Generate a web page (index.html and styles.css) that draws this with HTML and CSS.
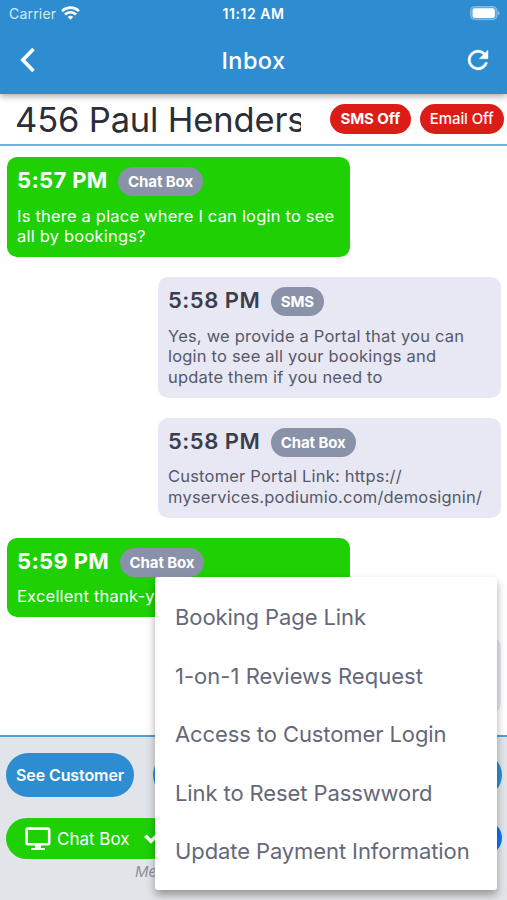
FILE: index.html
```html
<!DOCTYPE html>
<html lang="en">
<head>
<meta charset="utf-8">
<title>Inbox</title>
<link rel="stylesheet" href="styles.css">
</head>
<body>
<div class="phone">
  <header class="top">
    <div class="status">
      <div class="carrier"><span>Carrier</span>
        <svg width="19" height="14" viewBox="0 0 19 14" fill="none" stroke="#fff" stroke-width="2.7"><path d="M1.1 5.1a12.1 12.1 0 0 1 16.8 0M4 8.5a7.9 7.9 0 0 1 11 0"/><path d="M9.5 13.7L6.7 11a4 4 0 0 1 5.6 0z" fill="#fff" stroke="none"/></svg>
      </div>
      <div class="clock">11:12 AM</div>
      <div class="battery"><svg width="30" height="15" viewBox="0 0 30 15"><rect x=".6" y=".6" width="26.4" height="13" rx="4" fill="#5ea8db" stroke="#8dc0e4" stroke-width="1"/><rect x="2.6" y="2.2" width="22.2" height="9.8" rx="2.2" fill="#fff"/><path d="M27.9 5v4.4q1.6-.6 1.6-2.2T27.9 5z" fill="#8dc0e4"/></svg></div>
    </div>
    <nav class="bar">
      <svg class="back" width="16" height="26" viewBox="0 0 16 26" fill="none" stroke="#fff" stroke-width="3.6"><path d="M13.5 2L2.8 13l10.7 11"/></svg>
      <h1>Inbox</h1>
      <svg class="reload" width="30" height="30" viewBox="0 0 24 24" fill="#fff" stroke="#fff" stroke-width=".3"><path d="M17.65 6.35A7.96 7.96 0 0 0 12 4a8 8 0 1 0 7.73 10h-2.08A6 6 0 1 1 12 6c1.66 0 3.14.69 4.22 1.78L13 11h7V4z"/></svg>
    </nav>
  </header>
  <section class="person">
    <div class="name">456 Paul Henders</div>
    <span class="off sms">SMS Off</span>
    <span class="off email">Email Off</span>
  </section>
  <main class="thread">
    <article class="msg in">
      <div class="head"><time>5:57 PM</time><span class="tag">Chat Box</span></div>
      <p>Is there a place where I can login to see<br>all by bookings?</p>
    </article>
    <article class="msg out">
      <div class="head"><time>5:58 PM</time><span class="tag">SMS</span></div>
      <p>Yes, we provide a Portal that you can<br>login to see all your bookings and<br>update them if you need to</p>
    </article>
    <article class="msg out">
      <div class="head"><time>5:58 PM</time><span class="tag">Chat Box</span></div>
      <p>Customer Portal Link: https://<br>myservices.podiumio.com/demosignin/</p>
    </article>
    <article class="msg in">
      <div class="head"><time>5:59 PM</time><span class="tag">Chat Box</span></div>
      <p>Excellent thank-y</p>
    </article>
    <article class="msg out last"></article>
  </main>
  <footer class="composer">
    <div class="row">
      <button class="btn customer">See Customer</button>
      <button class="btn wide"></button>
    </div>
    <div class="row second">
      <button class="btn channel">
        <svg width="26" height="24" viewBox="0 0 26 24" fill="none" stroke="#fff" stroke-width="2.6"><rect x="1.6" y="1.6" width="22.6" height="15.6" rx="1.4"/><path d="M12.9 17.5v4" stroke-width="6"/><path d="M6 22h14" stroke-width="2"/></svg>
        <span>Chat Box</span>
        <svg class="chev" width="14" height="10" viewBox="0 0 14 10" fill="none" stroke="#fff" stroke-width="3.6"><path d="M1.3 1.8L7 7.3l5.7-5.5"/></svg>
      </button>
      <button class="btn send"></button>
    </div>
    <div class="hint">Me</div>
  </footer>
  <div class="menu">
    <div class="item">Booking Page Link</div>
    <div class="item reviews">1-on-1 Reviews Request</div>
    <div class="item">Access to Customer Login</div>
    <div class="item">Link to Reset Passwword</div>
    <div class="item">Update Payment Information</div>
  </div>
</div>
</body>
</html>
```
FILE: styles.css
```css
* { box-sizing: border-box; }
body { margin: 0; font-family: Inter, "Liberation Sans", sans-serif; background: #fff; }
.phone { position: relative; width: 507px; height: 900px; overflow: hidden; display: flex; flex-direction: column; }
.top { height: 94px; background: #2d8dd0; color: #fff; box-shadow: 0 2px 7px rgba(0,0,0,.36); flex: none; z-index: 1; }
.status { height: 27px; display: grid; grid-template-columns: 1fr auto 1fr; align-items: center; padding: 0 7px 0 9px; font-size: 14px; }
.carrier { display: flex; align-items: center; gap: 6px; letter-spacing: .2px; color: #d9eaf7; }
.carrier svg { margin: -2px 0 0 -1px; }
.clock { font-weight: 600; font-size: 14px; letter-spacing: .55px; margin-left: -2px; }
.battery { display: flex; justify-content: flex-end; }
.bar { height: 66px; display: grid; grid-template-columns: 1fr auto 1fr; align-items: center; padding: 0 14px 0 20px; }
.bar h1 { margin: 0 6px 0 0; font-size: 23.5px; font-weight: 500; letter-spacing: .4px; }
.reload { justify-self: end; }
.person { height: 52px; flex: none; display: flex; align-items: center; padding-left: 15px; border-bottom: 2px solid #6db4e0; }
.name { width: 286px; overflow: hidden; white-space: nowrap; font-size: 34.5px; line-height: 44px; color: #2b2d38; letter-spacing: -.15px; padding-top: 2px; }
.off { height: 30px; line-height: 30px; border-radius: 15px; background: #dc1c16; color: #fff; text-align: center; font-size: 15px; white-space: nowrap; }
.sms { width: 80.5px; margin-left: 29px; font-weight: 700; letter-spacing: -.05px; }
.email { width: 84.5px; margin-left: 9px; font-weight: 500; letter-spacing: -.1px; }
.thread { height: 589px; flex: none; padding: 11px 6.5px 0 7px; display: flex; flex-direction: column; gap: 20px; }
.msg { width: 343px; border-radius: 10px; padding: 8px 10px 10px; flex: none; }
.in { background: #1ed004; color: #fff; }
.out { width: 342.5px; background: #e8e8f4; color: #555968; align-self: flex-end; }
.head { display: flex; height: 32px; margin-bottom: 8.7px; }
.msg time { font-weight: 700; font-size: 22px; line-height: 31px; letter-spacing: .35px; }
.out time { color: #3b3e4b; font-weight: 600; letter-spacing: .5px; }
.tag { height: 29px; line-height: 29px; margin: 2px 0 0 10.4px; padding: 0 10px; border-radius: 15px; background: #8992a8; color: #fff; font-weight: 700; font-size: 15px; letter-spacing: -.1px; }
.msg p { margin: 0; font-size: 16.5px; line-height: 20.67px; letter-spacing: .2px; white-space: nowrap; }
.last { height: 76px; }
.composer { flex: 1; background: #e1e5e9; border-top: 2px solid #4d9fd6; padding: 16px 5px 0 6px; }
.row { display: flex; justify-content: space-between; }
.second { margin-top: 21px; }
.btn { border: 0; padding: 0; color: #fff; font-family: inherit; border-radius: 22px; white-space: nowrap; }
.customer { width: 128px; height: 44px; background: #2d8dd0; font-size: 16px; font-weight: 600; letter-spacing: -.1px; }
.wide { width: 349px; background: #2d8dd0; }
.channel { display: flex; align-items: center; width: 166px; height: 41px; padding-left: 19px; background: #1ed004; font-size: 17px; }
.channel span { margin-left: 6px; }
.chev { margin-left: 14px; }
.send { width: 90px; height: 34px; margin-top: 3px; background: #0879f5; }
.hint { padding: 4px 0 0 129px; font-size: 15px; line-height: 18px; font-style: italic; color: #8c8f9c; }
.menu { position: absolute; left: 155px; top: 577px; width: 342px; height: 313px; padding: 11px 20px; background: #fff; border-radius: 3px; box-shadow: 0 5px 9px rgba(0,0,0,.34); z-index: 2; }
.item { height: 58.5px; line-height: 58.5px; font-size: 22px; letter-spacing: -.1px; color: #646879; white-space: nowrap; }
.reviews { letter-spacing: .02px; }
```
